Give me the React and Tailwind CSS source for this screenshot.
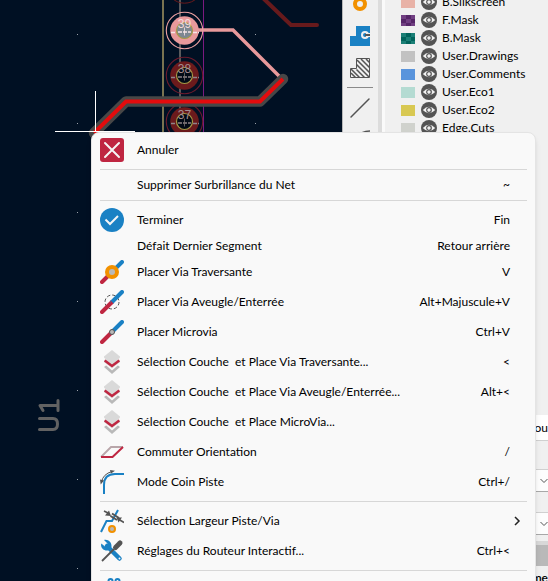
function Pad({ cy, n, bright }) {
  const body = bright ? "#e8999b" : "#6b1a1c";
  const ring = bright ? "#eba0a2" : "#6b1a2c";
  const hole = bright ? "#7d8791" : "#020a16";
  return (
    <g>
      <circle cx="184.5" cy={cy} r="18.2" fill="none" stroke={ring} strokeWidth="1.1" />
      <circle cx="184.5" cy={cy} r="14.3" fill={body} />
      <circle cx="184.5" cy={cy} r="8" fill={hole} stroke="#a59a45" strokeWidth="1.2" />
      <text x="184.5" y={cy - 3} textAnchor="middle" fontSize="12" fill={bright ? "#f3dada" : "#a58d90"} fontFamily="Liberation Sans">{n}</text>
      <path d={`M171 ${cy + 2}h5M178 ${cy + 1.5}h13M193 ${cy + 2}h6`} stroke={bright ? "#f6e6e6" : "#8f8388"} strokeWidth="1.6" strokeDasharray="4 1" />
      <path d={`M184.5 ${cy - 3}v8`} stroke={bright ? "#f6e6e6" : "#77706c"} strokeWidth="0.8" />
    </g>
  );
}

function Board() {
  return (
    <svg className="absolute left-0 top-0" width="342" height="581" viewBox="0 0 342 581" fill="none">
      <path d="M163 0V581" stroke="#7a7350" strokeWidth="2" />
      <path d="M180 0V581" stroke="#5a5a5c" strokeWidth="2" />
      <path d="M203.500 0V581" stroke="#7b1a80" strokeWidth="1" />
      <circle cx="184.5" cy="-15" r="18.2" stroke="#6b1a1c" />
      <path d="M264 -1L291 25H317" stroke="#671a1c" strokeWidth="4" strokeLinecap="round" />
      <path d="M184 30H233L281 78" stroke="#e8999b" strokeWidth="3.5" />
      <Pad cy={30.500} n="39" bright />
      <Pad cy={75.500} n="38" />
      <Pad cy={121.500} n="37" />
      <path d="M94 133L126 101.500H260L283 79" stroke="#474747" strokeWidth="10.500" strokeLinejoin="round" strokeLinecap="round" />
      <path d="M94 133L126 101.500H260L283 79" stroke="#e30b0d" strokeWidth="4" />
      <path d="M95.500 91V132M55 131.500H135" stroke="#fff" />
      {[34, 123, 212, 301, 390, 479, 568].map((y) => (
        <g key={y} fill="#9aa0a8">
          <rect x="77" y={y} width="1" height="1" />
          <rect x="255" y={y} width="1" height="1" />
        </g>
      ))}
      <g stroke="#626262" strokeWidth="3" strokeLinecap="round" strokeLinejoin="round">
        <path d="M39.500 418.500H53Q57.500 418.500 57.500 424Q57.500 429.500 53 429.500H39.500" />
        <path d="M58 400.500V410.500M58 405.500H40L43 410.500" />
      </g>
    </svg>
  );
}

function MenuIcon({ name }) {
  const p = { width: 24, height: 24, viewBox: "0 0 24 24", fill: "none", "aria-hidden": true };
  const red = "#bf2641";
  const blue = "#1a81c4";
  const trace = (
    <>
      <path d="M2 22L12 12" stroke={red} strokeWidth="4" strokeLinecap="round" />
      <path d="M22 2L12 12" stroke={blue} strokeWidth="4" strokeLinecap="round" />
      <path d="M10.600 10.600L13.400 13.400L10 16Z" fill={red} />
    </>
  );
  switch (name) {
    case "cancel":
      return <svg {...p}><rect width="24" height="24" rx="3" fill={red} /><path d="M5 5L19 19M19 5L5 19" stroke="#f5f5f5" strokeWidth="2" strokeLinecap="round" /></svg>;
    case "check":
      return <svg {...p}><circle cx="12" cy="12" r="12" fill={blue} /><path d="M5.500 11.500L10 16L18 8" stroke="#f5f5f5" strokeWidth="2" /></svg>;
    case "via":
      return <svg {...p}>{trace}<circle cx="12" cy="12" r="5" fill="#b9b9b9" stroke="#f29100" strokeWidth="4" /></svg>;
    case "blind":
      return <svg {...p}><circle cx="12" cy="12" r="7" stroke="#545454" strokeWidth="1" strokeDasharray="3.500 2" />{trace}</svg>;
    case "micro":
      return <svg {...p}>{trace}<circle cx="12" cy="12" r="2.500" fill="#b9b9b9" stroke="#545454" /></svg>;
    case "layers":
      return (
        <svg {...p}>
          <path d="M4 17L12 11L20 17L12 24Z" fill="#b9b9b9" />
          <path d="M4 13.500L12 8L20 13.500L12 20.500Z" fill="#f9f9f9" />
          <path d="M4 12L12 6L20 12L12 18.500Z" fill="#dedede" />
          <path d="M4 6.500L12 0L20 6.500V12L12 17L4 12Z" fill="#d9d9d9" />
          <path d="M4 7.500L4 10L6 9.500ZM20 7.500L20 10L18 9.500Z" fill="#f9f9f9" />
          <path d="M4.700 10.500L12 16L19.300 10.500" stroke={red} strokeWidth="2.400" />
        </svg>
      );
    case "posture":
      return <svg {...p}><path d="M1 17L11 7H23" stroke="#b9a6aa" strokeWidth="1.800" /><path d="M23 7L12.500 17H1" stroke={red} strokeWidth="2" strokeLinejoin="round" /></svg>;
    case "corner":
      return (
        <svg {...p}>
          <path d="M4 24V15Q4 4 15 4H24" stroke={blue} strokeWidth="2" />
          <path d="M1.500 12Q3 4 12 1.500" stroke="#545454" />
          <path d="M0 9.500L4 10.500L0.700 14.500ZM10 0L15 0.800L11 3.500Z" fill="#545454" />
        </svg>
      );
    case "width":
      return (
        <svg {...p}>
          <path d="M1 23L6.500 12H12L18 1" stroke={blue} strokeWidth="2" />
          <path d="M10.500 7L17 11M12 4.500L19 9" stroke="#545454" strokeWidth="2" />
          <path d="M4 2L8 4M19 10.500L24 13.500" stroke="#545454" strokeWidth="1.600" />
          <path d="M9 1.500L11 7L5 6.500ZM16.500 8.500L22 8.500L18.500 13.500Z" fill="#545454" />
          <circle cx="12" cy="20" r="3" fill="#b9b9b9" stroke="#f29100" strokeWidth="2" />
        </svg>
      );
    case "tools":
      return (
        <svg {...p}>
          <path d="M7 7L19.500 19.500" stroke={blue} strokeWidth="4.500" strokeLinecap="round" />
          <path d="M4 1C8 0 12 3 11.500 8L8 11.500C4 12 0 9 1.300 4.500L5 7.500L7.500 6.500V4.500Z" fill={blue} />
          <circle cx="19.500" cy="19.500" r="1" fill="#f9f9f9" />
          <path d="M2 22L14 10" stroke="#545454" strokeWidth="1.800" />
          <path d="M15.500 8.500L20 4" stroke="#545454" strokeWidth="5" strokeLinecap="round" />
        </svg>
      );
    case "grid":
      return <svg {...p}><g stroke={blue} strokeWidth="2"><circle cx="10.500" cy="3" r="2" /><circle cx="17.500" cy="3" r="2" /></g></svg>;
    default:
      return null;
  }
}

const ITEMS = [
  { icon: "cancel", label: "Annuler" },
  null,
  { label: "Supprimer Surbrillance du Net", keys: "~" },
  null,
  { icon: "check", label: "Terminer", keys: "Fin" },
  { label: "Défait Dernier Segment", keys: "Retour arrière" },
  { icon: "via", label: "Placer Via Traversante", keys: "V" },
  { icon: "blind", label: "Placer Via Aveugle/Enterrée", keys: "Alt+Majuscule+V" },
  { icon: "micro", label: "Placer Microvia", keys: "Ctrl+V" },
  { icon: "layers", label: "Sélection Couche  et Place Via Traversante...", keys: "<" },
  { icon: "layers", label: "Sélection Couche  et Place Via Aveugle/Enterrée...", keys: "Alt+<" },
  { icon: "layers", label: "Sélection Couche  et Place MicroVia..." },
  { icon: "posture", label: "Commuter Orientation", keys: "/" },
  { icon: "corner", label: "Mode Coin Piste", keys: "Ctrl+/" },
  null,
  { icon: "width", label: "Sélection Largeur Piste/Via", submenu: true },
  { icon: "tools", label: "Réglages du Routeur Interactif...", keys: "Ctrl+<" },
  null,
  { icon: "grid", label: "" },
];

function ContextMenu() {
  return (
    <div role="menu" className="absolute left-[91px] top-[132px] w-[445px] rounded-lg border border-[#e4e4e4] bg-[#f9f9f9] px-2 py-[2px] shadow-md">
      {ITEMS.map((it, i) =>
        it === null ? (
          <hr key={i} className="my-1 border-t border-[#d7d7d7]" />
        ) : (
          <button key={i} type="button" role="menuitem" className={`flex w-full items-center text-left ${it.icon ? "h-[30px]" : "h-[22px]"}`}>
            <span className="w-[37px] shrink-0">{it.icon && <MenuIcon name={it.icon} />}</span>
            <span className="flex-1 whitespace-pre">{it.label}</span>
            {it.keys && <span className="pr-[17px]">{it.keys}</span>}
            {it.submenu && (
              <svg className="mr-[6px]" width="8" height="10" viewBox="0 0 8 10" fill="none" stroke="#222" strokeWidth="1.500" aria-hidden="true"><path d="M2 1L6 5L2 9" /></svg>
            )}
          </button>
        )
      )}
    </div>
  );
}

function Swatch({ a, b }) {
  return (
    <svg width="14" height="11" viewBox="0 0 14 11" shapeRendering="crispEdges" aria-hidden="true">
      <rect width="14" height="11" fill={a} />
      {b && <path d="M5 0h5v4h-5zM0 4h5v4h-5zM10 4h4v4h-4zM5 8h5v3h-5z" fill={b} />}
    </svg>
  );
}

function Eye() {
  return (
    <svg width="16" height="16" viewBox="0 0 16 16" aria-hidden="true">
      <circle cx="8" cy="8" r="8" fill="#545454" />
      <path d="M1.800 8Q8 1.500 14.200 8Q8 14.500 1.800 8Z" fill="#f0f0f0" />
      <circle cx="8" cy="8" r="2.300" fill="#f0f0f0" stroke="#545454" strokeWidth="1.200" />
    </svg>
  );
}

const LAYERS = [
  ["B.Silkscreen", "#e8b2a7"],
  ["F.Mask", "#713f82", "#562668"],
  ["B.Mask", "#1b7f76", "#02645c"],
  ["User.Drawings", "#c2c2c2"],
  ["User.Comments", "#5994dc"],
  ["User.Eco1", "#b4dbd2"],
  ["User.Eco2", "#d8c852"],
  ["Edge.Cuts", "#d0d2cd"],
];

function Toolbar() {
  return (
    <div className="flex w-9 shrink-0 flex-col items-center border-l border-[#b8b8b8] bg-[#f0f0f0]">
      <svg width="35" height="132" viewBox="343 0 35 132" fill="none" aria-hidden="true">
        <circle cx="360" cy="4" r="5" stroke="#f29100" strokeWidth="4" />
        <path d="M350 46V36H356V26H370V46Z" fill="#1a81c4" />
        <circle cx="365" cy="35" r="3" stroke="#f0f0f0" strokeWidth="2" />
        <path d="M365 35H370" stroke="#545454" strokeWidth="2" />
        <path d="M366 33.500H370M366 36.500H370" stroke="#f0f0f0" />
        <path d="M350.500 77.500V68.500H356.500V58.500H369.500V77.500Z" stroke="#545454" />
        <path d="M351 73L355.500 77.500M351 69L359.500 77.500M356.500 69.500L364.500 77.500M356.500 64.500L369 77M357 60L369.500 72.500M361 59L369.500 67.500M366 59L369.500 62.500" stroke="#545454" strokeWidth="1.500" />
        <path d="M347 87.500H373" stroke="#8a8a8a" />
        <path d="M351 117L369 99" stroke="#545454" strokeWidth="1.500" strokeLinecap="round" />
        <path d="M360 134Q364 131 370 131" stroke="#545454" strokeWidth="1.500" />
      </svg>
    </div>
  );
}

function Combo({ label }) {
  return (
    <div className="relative h-[23px] shrink-0 border-y border-t-[#d0d0d0] border-b-[#a8a8a8] bg-[#fdfdfd]">
      <select aria-label={label} className="h-full w-full appearance-none bg-transparent"><option></option></select>
      <svg className="pointer-events-none absolute right-0 top-2" width="8" height="6" viewBox="0 0 8 6" fill="none" stroke="#555" aria-hidden="true"><path d="M0.500 1L4 4.500L7.500 1" /></svg>
    </div>
  );
}

export default function App() {
  return (
    <div className="relative flex h-screen overflow-hidden bg-[#f0f0f0] font-[Lato,'Open_Sans',sans-serif] text-[12px] leading-4 text-black">
      <main className="relative min-w-0 flex-1 overflow-hidden bg-[#001023]">
        <Board />
      </main>
      <Toolbar />
      <div className="w-1 shrink-0 bg-[#dcdcdc]" />
      <div className="w-[3px] shrink-0 bg-[#fafafa]" />
      <aside className="flex w-[163px] shrink-0 flex-col bg-[#f0f0f0]">
        <ul className="-mt-[7px] h-[422px] shrink-0">
          {LAYERS.map(([name, a, b]) => (
            <li key={name} className="flex h-[18px] items-center pl-4">
              <Swatch a={a} b={b} />
              <span className="ml-[6px] mr-[5px]"><Eye /></span>
              {name}
            </li>
          ))}
        </ul>
        <div className="flex h-[26px] shrink-0 items-center justify-end overflow-hidden border-b border-[#d0d0d0] bg-white">Cou</div>
        <div className="mt-7 shrink-0"><Combo label="Piste" /></div>
        <div className="mt-5 shrink-0"><Combo label="Via" /></div>
        <div className="mt-[6px] h-1 shrink-0 bg-[#d8d8d8]" />
        <div className="h-[21px] shrink-0 bg-[#b9b9b9]" />
        <div className="mt-1 shrink-0 text-right font-semibold">me</div>
      </aside>
      <ContextMenu />
    </div>
  );
}
